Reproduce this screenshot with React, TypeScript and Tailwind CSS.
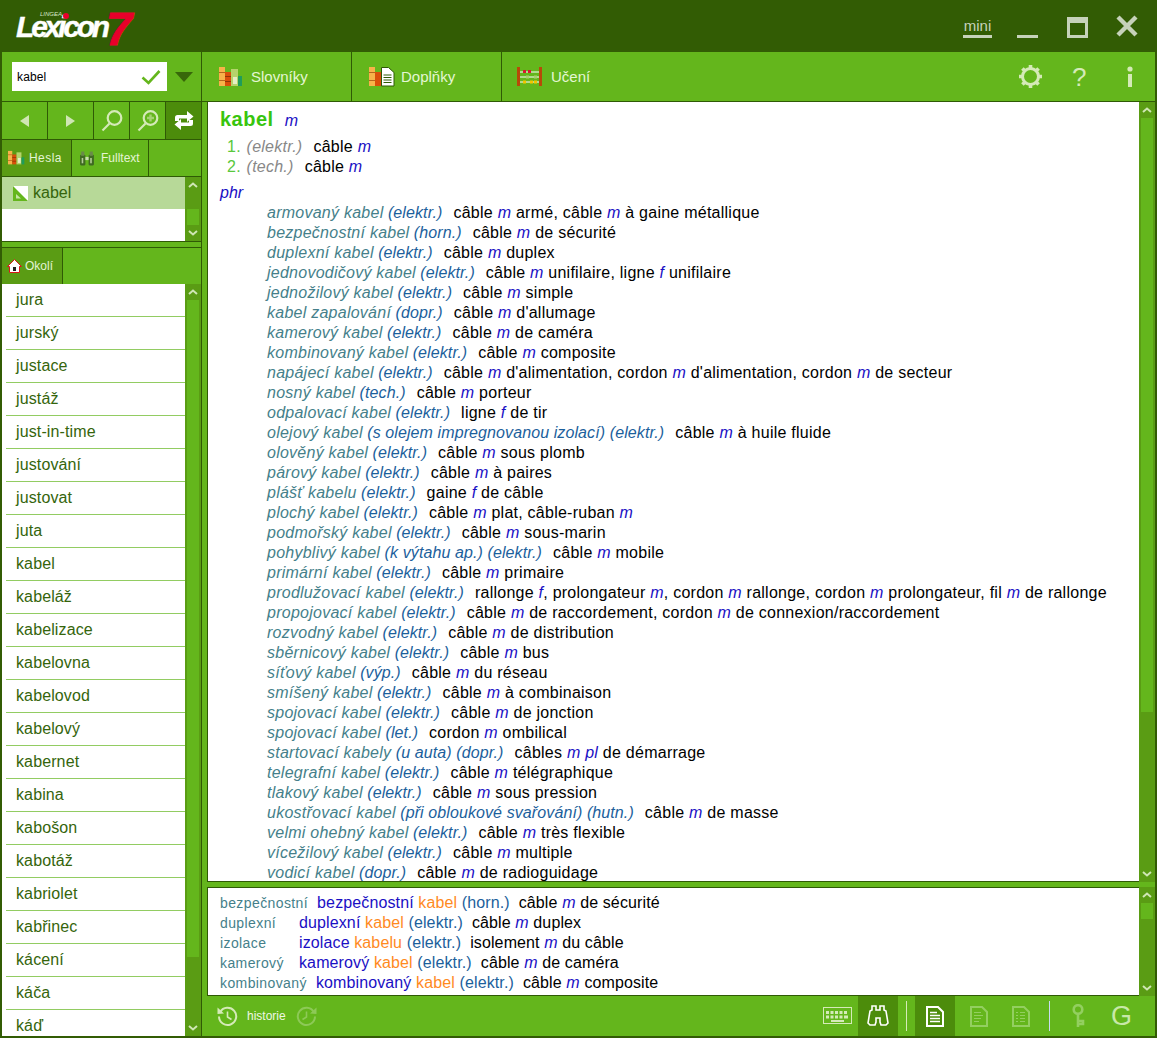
import React from "react";

const arial = "font-['Liberation_Sans',Arial,sans-serif]";

const phrases: [string, string, string][] = [
  ["armovaný kabel", "(elektr.)", "câble *m* armé, câble *m* à gaine métallique"],
  ["bezpečnostní kabel", "(horn.)", "câble *m* de sécurité"],
  ["duplexní kabel", "(elektr.)", "câble *m* duplex"],
  ["jednovodičový kabel", "(elektr.)", "câble *m* unifilaire, ligne *f* unifilaire"],
  ["jednožilový kabel", "(elektr.)", "câble *m* simple"],
  ["kabel zapalování", "(dopr.)", "câble *m* d'allumage"],
  ["kamerový kabel", "(elektr.)", "câble *m* de caméra"],
  ["kombinovaný kabel", "(elektr.)", "câble *m* composite"],
  ["napájecí kabel", "(elektr.)", "câble *m* d'alimentation, cordon *m* d'alimentation, cordon *m* de secteur"],
  ["nosný kabel", "(tech.)", "câble *m* porteur"],
  ["odpalovací kabel", "(elektr.)", "ligne *f* de tir"],
  ["olejový kabel", "(s olejem impregnovanou izolací) (elektr.)", "câble *m* à huile fluide"],
  ["olověný kabel", "(elektr.)", "câble *m* sous plomb"],
  ["párový kabel", "(elektr.)", "câble *m* à paires"],
  ["plášť kabelu", "(elektr.)", "gaine *f* de câble"],
  ["plochý kabel", "(elektr.)", "câble *m* plat, câble-ruban *m*"],
  ["podmořský kabel", "(elektr.)", "câble *m* sous-marin"],
  ["pohyblivý kabel", "(k výtahu ap.) (elektr.)", "câble *m* mobile"],
  ["primární kabel", "(elektr.)", "câble *m* primaire"],
  ["prodlužovací kabel", "(elektr.)", "rallonge *f*, prolongateur *m*, cordon *m* rallonge, cordon *m* prolongateur, fil *m* de rallonge"],
  ["propojovací kabel", "(elektr.)", "câble *m* de raccordement, cordon *m* de connexion/raccordement"],
  ["rozvodný kabel", "(elektr.)", "câble *m* de distribution"],
  ["sběrnicový kabel", "(elektr.)", "câble *m* bus"],
  ["síťový kabel", "(výp.)", "câble *m* du réseau"],
  ["smíšený kabel", "(elektr.)", "câble *m* à combinaison"],
  ["spojovací kabel", "(elektr.)", "câble *m* de jonction"],
  ["spojovací kabel", "(let.)", "cordon *m* ombilical"],
  ["startovací kabely", "(u auta) (dopr.)", "câbles *m pl* de démarrage"],
  ["telegrafní kabel", "(elektr.)", "câble *m* télégraphique"],
  ["tlakový kabel", "(elektr.)", "câble *m* sous pression"],
  ["ukostřovací kabel", "(při obloukové svařování) (hutn.)", "câble *m* de masse"],
  ["velmi ohebný kabel", "(elektr.)", "câble *m* très flexible"],
  ["vícežilový kabel", "(elektr.)", "câble *m* multiple"],
  ["vodicí kabel", "(dopr.)", "câble *m* de radioguidage"],
];

const words = [
  "jura", "jurský", "justace", "justáž", "just-in-time", "justování", "justovat", "juta", "kabel", "kabeláž",
  "kabelizace", "kabelovna", "kabelovod", "kabelový", "kabernet", "kabina", "kabošon", "kabotáž", "kabriolet",
  "kabřinec", "kácení", "káča", "káď",
];

const hits: [string, string, string, string, string][] = [
  ["bezpečnostní", "bezpečnostní", "kabel", "(horn.)", "câble *m* de sécurité"],
  ["duplexní", "duplexní", "kabel", "(elektr.)", "câble *m* duplex"],
  ["izolace", "izolace", "kabelu", "(elektr.)", "isolement *m* du câble"],
  ["kamerový", "kamerový", "kabel", "(elektr.)", "câble *m* de caméra"],
  ["kombinovaný", "kombinovaný", "kabel", "(elektr.)", "câble *m* composite"],
];

function Tr({ s }: { s: string }) {
  return (
    <span className="text-black">
      {s.split("*").map((p, i) =>
        i % 2 ? (
          <em key={i} className="text-[#1a0fc4] italic">{p}</em>
        ) : (
          <span key={i}>{p}</span>
        )
      )}
    </span>
  );
}

function Chevron({ up }: { up?: boolean }) {
  return (
    <svg width="10" height="6" viewBox="0 0 10 6" className="shrink-0">
      <path d={up ? "M1 5 L5 1.500 L9 5" : "M1 1 L5 4.500 L9 1"} fill="none" stroke="#cfe6b4" strokeWidth="2" />
    </svg>
  );
}

function Scrollbar({ before, thumb }: { before: number; thumb: number }) {
  return (
    <div className="w-4 shrink-0 bg-[#5a9c14] flex flex-col items-center">
      <div className="h-[16px] shrink-0 flex items-center justify-center"><Chevron up /></div>
      <div className="flex-1 w-full flex flex-col items-center min-h-0">
        <div style={{ height: before }} />
        <div className="w-[12px] bg-[#64b61c]" style={{ height: thumb }} />
      </div>
      <div className="h-[16px] shrink-0 flex items-center justify-center"><Chevron /></div>
    </div>
  );
}

function Books({ w = 24, h = 20 }: { w?: number; h?: number }) {
  return (
    <svg width={w} height={h} viewBox="0 0 24 20" className="shrink-0">
      <rect x="0" y="0" width="6" height="19" fill="#f7b24a" />
      <rect x="0" y="5" width="6" height="1" fill="#b5651d" />
      <rect x="0" y="13" width="6" height="1" fill="#b5651d" />
      <rect x="6" y="5" width="6" height="14" fill="#d94e0a" />
      <rect x="6" y="9" width="6" height="1" fill="#8f3405" />
      <rect x="6" y="14" width="6" height="1" fill="#8f3405" />
      <rect x="12" y="2" width="7" height="17" fill="#b5d36c" />
      <rect x="14" y="10" width="4" height="7" fill="#e6eec4" />
      <rect x="19" y="9" width="4" height="10" fill="#1f9c5a" />
    </svg>
  );
}

function NavBtn({ w, dark, children }: { w: string; dark?: boolean; children: React.ReactNode }) {
  return (
    <div className={`${w} h-full shrink-0 flex items-center justify-center border-r border-[#2f5a05] last:border-r-0 ${dark ? "bg-[#4c8c0b]" : ""}`}>
      {children}
    </div>
  );
}

function Magnifier({ plus }: { plus?: boolean }) {
  return (
    <svg width="22" height="23" viewBox="0 0 22 23">
      <circle cx="13.500" cy="9" r="6.800" fill="none" stroke="#d5eab8" strokeWidth="2.200" />
      {plus && <path d="M13.500 5.500v7M10 9h7" stroke="#a5d274" strokeWidth="2.400" />}
      <path d="M8.500 14.500 L1.500 21.500" stroke="#d5eab8" strokeWidth="2.200" />
    </svg>
  );
}

function DocIcon({ lines, bright }: { lines: string; bright?: boolean }) {
  const c = bright ? "#ffffff" : "#93cf60";
  return (
    <svg width="18" height="21" viewBox="0 0 18 21">
      <path d="M1 1h11l5 5v14H1z" fill="none" stroke={c} strokeWidth="2" />
      <path d={lines} stroke={c} strokeWidth={bright ? 1.600 : 1} />
    </svg>
  );
}

function HistoryIcon({ dim, flip }: { dim?: boolean; flip?: boolean }) {
  const c = dim ? "#8dc957" : "#d5eab8";
  return (
    <svg width="21" height="21" viewBox="0 0 21 21" style={flip ? { transform: "scaleX(-1)" } : undefined}>
      <path d="M3.200 6 A8.600 8.600 0 1 1 2 10.500" fill="none" stroke={c} strokeWidth="2" />
      <path d="M0.500 1.500 L7 7.500 L0.500 8z" fill={c} />
      <path d="M10.500 5.500v5.500l4 2.500" fill="none" stroke={c} strokeWidth="1.600" />
    </svg>
  );
}

export default function App() {
  return (
    <div className={`${arial} w-[1157px] h-[1038px] overflow-hidden bg-[#325c04] flex flex-col`}>
      {/* Title bar */}
      <div className="h-[52px] shrink-0 flex items-center justify-between">
        <div className="relative w-[130px] h-[52px] ml-[14px]">
          <span className="absolute left-[2px] top-[19px] text-white font-bold italic text-[30px] leading-[16px] tracking-[-3.200px] [-webkit-text-stroke:0.4px_white]">Lexicon</span>
          <span className="absolute left-[26px] top-[11px] text-[#d8e6c8] italic text-[6px] leading-[7px]">LINGEA</span>
          <span className="absolute left-[49px] top-[13px] w-[6px] h-[6px] rounded-full bg-[#e8002a]" />
          <span className="absolute left-[92px] top-[7px] text-[#e8002a] font-bold italic text-[47px] leading-[44px] [-webkit-text-stroke:1px_#e8002a]">7</span>
        </div>
        <div className="flex items-center text-[#c6d2ba] pr-[19px]">
          <span className="text-[15px] leading-[18px] font-normal border-b-[3px] border-[#c6d2ba] mt-[2px] w-[29px] text-center">mini</span>
          <span className="w-[21px] h-[3px] bg-[#c6d2ba] ml-[25px] mt-[21px]" />
          <span className="w-[21px] h-[21px] ml-[29px] border-[3px] border-[#c6d2ba] border-t-[6px] mt-[2px]" />
          <svg width="22" height="22" viewBox="0 0 22 22" className="ml-[28px]">
            <path d="M2 2 L20 20 M20 2 L2 20" stroke="#c6d2ba" strokeWidth="4.400" />
          </svg>
        </div>
      </div>

      {/* Body */}
      <div className="flex-1 min-h-0 flex pl-[2px] pr-[2px] pb-[2px]">
        {/* Sidebar */}
        <aside className="w-[199px] shrink-0 flex flex-col bg-[#64b61c]">
          <div className="h-[49px] shrink-0 flex items-center pl-[10px]">
            <div className="w-[155px] h-[29px] bg-white flex items-center justify-between pl-[5px] pr-[6px]">
              <span className="text-[12px] tracking-[0.15px] text-black">kabel</span>
              <svg width="20" height="16" viewBox="0 0 20 16">
                <path d="M1.500 8.500 L7.500 14 L18.500 2" fill="none" stroke="#64b61c" strokeWidth="2.600" />
              </svg>
            </div>
            <svg width="18" height="10" viewBox="0 0 18 10" className="ml-[8px]">
              <path d="M0 0H18L9 10z" fill="#38670a" />
            </svg>
          </div>
          <div className="h-[38px] shrink-0 flex border-t border-[#2f5a05]">
            <NavBtn w="w-[46px]">
              <svg width="9" height="12" viewBox="0 0 9 12"><path d="M9 0V12L0 6z" fill="#cfe6b4" /></svg>
            </NavBtn>
            <NavBtn w="w-[46px]">
              <svg width="9" height="12" viewBox="0 0 9 12"><path d="M0 0V12L9 6z" fill="#cfe6b4" /></svg>
            </NavBtn>
            <NavBtn w="w-[36px]"><Magnifier /></NavBtn>
            <NavBtn w="w-[36px]"><Magnifier plus /></NavBtn>
            <NavBtn w="w-[35px]" dark>
              <svg width="20" height="21" viewBox="0 0 20 21">
                <path d="M1 11V7.500Q1 5 3.500 5H13V1L19.500 6.500 13 12V8.500H5V11z" fill="#fff" />
                <path d="M19 10v3.500Q19 16 16.500 16H7v4L0.500 14.500 7 9v3.500h8V10z" fill="#fff" />
              </svg>
            </NavBtn>
          </div>
          <div className="h-[37px] shrink-0 flex border-t border-[#2f5a05] text-[12px] text-[#e4f4d4]">
            <div className="w-[70px] flex items-center bg-[#5a9c14] border-r border-[#2f5a05] pl-[6px] gap-[4px]">
              <Books w={17} h={16} />
              <span className="tracking-[0.45px]">Hesla</span>
            </div>
            <div className="w-[77px] flex items-center border-r border-[#2f5a05] pl-[7px] gap-[6px]">
              <svg width="16" height="17" viewBox="0 0 15 15">
                <rect x="1" y="4" width="5" height="10" rx="1" fill="#3f6a22" />
                <rect x="9" y="4" width="5" height="10" rx="1" fill="#3f6a22" />
                <rect x="2" y="1" width="3" height="4" fill="#6a8a4a" />
                <rect x="10" y="1" width="3" height="4" fill="#6a8a4a" />
                <rect x="6" y="6" width="3" height="3" fill="#c9ddb0" />
                <rect x="2.500" y="7" width="1.500" height="5" fill="#b5cc98" />
                <rect x="10.500" y="7" width="1.500" height="5" fill="#b5cc98" />
              </svg>
              <span>Fulltext</span>
            </div>
          </div>
          <div className="h-[65px] shrink-0 flex border-t border-[#2f5a05]">
            <div className="flex-1 bg-white">
              <div className="h-[32px] bg-[#b7d998] flex items-center pl-[11px] gap-[5px]">
                <svg width="15" height="15" viewBox="0 0 15 15">
                  <rect width="15" height="15" fill="#fff" />
                  <path d="M0 0 L15 15 H0z" fill="#64b61c" />
                  <path d="M3 8 L8 12.500 H3z" fill="#c6e6a4" />
                </svg>
                <span className="text-[16px] text-[#35650c]">kabel</span>
              </div>
            </div>
            <Scrollbar before={16} thumb={16} />
          </div>
          <div className="h-[6px] shrink-0 bg-[#64b61c] border-t border-[#2f5a05]" />
          <div className="h-[37px] shrink-0 flex border-t border-[#2f5a05] text-[12px] text-[#e4f4d4]">
            <div className="w-[61px] flex items-center bg-[#5a9c14] border-r border-[#2f5a05] pl-[5px] gap-[3px]">
              <svg width="15" height="14" viewBox="0 0 15 14">
                <path d="M7.500 0.500 L0.500 7.500 H2.500V13.500H12.500V7.500H14.500z" fill="#fff" stroke="#d81818" strokeWidth="1" />
                <rect x="6" y="8" width="3" height="4" fill="#222" />
              </svg>
              <span>Okolí</span>
            </div>
          </div>
          <div className="flex-1 min-h-0 flex">
            <div className="flex-1 bg-white overflow-hidden pl-[4px]">
              {words.map((w) => (
                <div key={w} className="h-[33px] shrink-0 flex items-center pl-[10px] border-b border-[#92cc62] text-[16px] tracking-[0.12px] text-[#35650c]">
                  {w}
                </div>
              ))}
            </div>
            <Scrollbar before={0} thumb={657} />
          </div>
        </aside>

        <div className="w-px shrink-0 bg-[#2f5a05]" />

        {/* Main */}
        <main className="flex-1 min-w-0 flex flex-col bg-[#64b61c]">
          <div className="h-[49px] shrink-0 flex items-center text-[15px] text-[#e4f6d4]">
            <div className="w-[150px] h-full flex items-center border-r border-[#2f5a05] pl-[17px] gap-[8px]">
              <Books />
              <span className="mt-[1px]">Slovníky</span>
            </div>
            <div className="w-[150px] h-full flex items-center border-r border-[#2f5a05] pl-[17px] gap-[6px]">
              <svg width="26" height="20" viewBox="0 0 26 20">
                <rect x="0" y="0" width="6" height="19" fill="#f7b24a" />
                <rect x="0" y="5" width="6" height="1" fill="#b5651d" />
                <rect x="0" y="13" width="6" height="1" fill="#b5651d" />
                <rect x="6" y="5" width="6" height="14" fill="#d94e0a" />
                <path d="M12.500 0.500h7l5.500 5v13.500h-12.500z" fill="#fff" stroke="#2f5a05" />
                <path d="M14.500 8h8M14.500 10.500h8M14.500 13h8M14.500 15.500h8" stroke="#2f5a05" />
              </svg>
              <span className="mt-[1px]">Doplňky</span>
            </div>
            <div className="w-[150px] h-full flex items-center pl-[15px] gap-[8px]">
              <svg width="26" height="20" viewBox="0 0 26 20">
                <rect x="0" y="0" width="3" height="19" fill="#b84a08" />
                <rect x="22" y="0" width="3" height="19" fill="#b84a08" />
                <path d="M3 5h19M3 10h19M3 15h19" stroke="#fff" />
                <path d="M6 3h3v3H6zM11 3h3v3h-3z" fill="#d81830" />
                <path d="M9 8.500h3v3H9zM17 8.500h3v3h-3z" fill="#a8d06c" />
                <path d="M6 13.500h3v3H6zM13 13.500h3v3h-3zM17 13.500h3v3h-3z" fill="#f4c400" />
              </svg>
              <span className="mt-[1px]">Učení</span>
            </div>
            <div className="flex-1 flex items-center justify-end">
              <svg width="25" height="25" viewBox="0 0 25 25">
                <circle cx="12.500" cy="12.500" r="8" fill="none" stroke="#d5eab8" strokeWidth="3" />
                <path d="M12.500 1v3M12.500 21v3M1 12.500h3M21 12.500h3M4.400 4.400l2.100 2.100M18.500 18.500l2.100 2.100M20.600 4.400l-2.100 2.100M6.500 18.500l-2.100 2.100" stroke="#d5eab8" strokeWidth="3.600" />
              </svg>
              <span className="ml-[29px] w-[14px] text-[26px] leading-none text-[#d5eab8]">?</span>
              <svg width="6" height="21" viewBox="0 0 6 21" className="ml-[41px] mr-[22px]">
                <circle cx="3" cy="3" r="2.600" fill="#d5eab8" />
                <rect x="1" y="8" width="4" height="13" fill="#d5eab8" />
              </svg>
            </div>
          </div>

          <div className="h-[781px] shrink-0 flex border-t border-[#2f5a05] pl-[5px]">
            <div className="flex-1 min-w-0 bg-white overflow-hidden pl-[12px] text-[16px] leading-[20px] border-b border-l border-[#2f5a05]">
              <div className="h-[25px] pt-[6px] flex items-baseline">
                <span className="text-[20px] leading-[22px] font-bold tracking-[0.5px] text-[#38c50e]">kabel</span>
                <em className="ml-[11px] text-[#1a0fc4] italic">m</em>
              </div>
              <div className="mt-[10px] pl-[7px]">
                <div className="h-[20px] whitespace-nowrap tracking-[0.25px]">
                  <span className="text-[#58c83c]">1.</span> <i className="text-[#888888] ml-[1px]">(elektr.)</i>
                  <span className="ml-[11px]"><Tr s="câble *m*" /></span>
                </div>
                <div className="h-[20px] whitespace-nowrap tracking-[0.25px]">
                  <span className="text-[#58c83c]">2.</span> <i className="text-[#888888] ml-[1px]">(tech.)</i>
                  <span className="ml-[11px]"><Tr s="câble *m*" /></span>
                </div>
              </div>
              <div className="h-[20px] mt-[6px]"><em className="text-[#1a0fc4] italic">phr</em></div>
              <div className="pl-[47px]">
                {phrases.map(([h, q, t], i) => (
                  <div key={i} className="h-[20px] whitespace-nowrap">
                    <i className="text-[#457f8a] tracking-[0.25px]">{h}</i> <i className="text-[#1c5f9c] tracking-[0.1px]">{q}</i>
                    <span className="ml-[11px] tracking-[0.25px]"><Tr s={t} /></span>
                  </div>
                ))}
              </div>
            </div>
            <Scrollbar before={0} thumb={594} />
          </div>

          <div className="h-[5px] shrink-0" />

          <div className="h-[109px] shrink-0 flex pl-[5px]">
            <div className="flex-1 min-w-0 bg-white border-t border-l border-b border-[#2f5a05] pl-[12px] pt-[5px] text-[16px] leading-[20px] overflow-hidden">
              {hits.map(([l, a, k, q, t]) => (
                <div key={l} className="h-[20px] whitespace-nowrap flex">
                  <span className="inline-block min-w-[79px] pr-[9px] text-[14px] tracking-[0.4px] text-[#457f8a]">{l}</span>
                  <span className="tracking-[0.12px]">
                    <span className="text-[#1a0fc4]">{a}</span> <span className="text-[#ff8a1e]">{k}</span> <span className="text-[#1c5f9c]">{q}</span>
                    <span className="ml-[9px]"><Tr s={t} /></span>
                  </span>
                </div>
              ))}
            </div>
            <Scrollbar before={0} thumb={16} />
          </div>

          {/* Footer */}
          <div className="flex-1 min-h-0 flex items-center text-[12px] text-[#eef8e4]">
            <div className="ml-[15px] w-[21px]"><HistoryIcon /></div>
            <span className="ml-[9px]">historie</span>
            <div className="ml-[10px]"><HistoryIcon dim flip /></div>
            <div className="flex-1" />
            <svg width="29" height="18" viewBox="0 0 29 18">
              <rect x="0.500" y="0.500" width="28" height="16" fill="none" stroke="#d5eab8" />
              <path d="M3 4h3v3H3zM7.500 4h3v3h-3zM12 4h3v3h-3zM16.500 4h3v3h-3zM21 4h3v3h-3zM3 8.500h3v3H3zM7.500 8.500h3v3h-3zM12 8.500h3v3h-3zM16.500 8.500h3v3h-3zM21 8.500h4v3h-4zM8 13h13v2H8z" fill="#d5eab8" />
            </svg>
            <div className="ml-[6px] w-[40px] h-full bg-[#4c8c0b] flex items-center justify-center">
              <svg width="22" height="22" viewBox="0 0 22 22">
                <path d="M5 1h4v4h4V1h4v4l2 1 2 12-2 2h-5l-1-3v-4H9v4l-1 3H3l-2-2L3 6l2-1z" fill="none" stroke="#fff" strokeWidth="1.600" />
              </svg>
            </div>
            <span className="ml-[8px] w-px h-[30px] bg-[#d5eab8]" />
            <div className="ml-[8px] w-[40px] h-full bg-[#4c8c0b] flex items-center justify-center">
              <DocIcon bright lines="M4 6.500h7M4 9.500h10M4 12.500h10M4 15.500h10" />
            </div>
            <div className="ml-[15px] w-[18px] flex"><DocIcon lines="M4 6.500h7M4 9.500h9M4 12.500h7M4 15.500h5" /></div>
            <div className="ml-[24px] w-[18px] flex"><DocIcon lines="M4 6.500h2M8 6.500h5M4 9.500h2M8 9.500h5M4 12.500h2M8 12.500h5M4 15.500h2M8 15.500h5" /></div>
            <span className="ml-[19px] w-px h-[30px] bg-[#c8dcf0]" />
            <svg width="14" height="24" viewBox="0 0 14 24" className="ml-[22px]">
              <circle cx="6" cy="5.500" r="4.300" fill="none" stroke="#93cf60" strokeWidth="2.600" />
              <path d="M6 9v14M6 17h5v3H6" fill="none" stroke="#93cf60" strokeWidth="2.600" />
            </svg>
            <span className="ml-[25px] mr-[23px] text-[27px] leading-none text-[#c8e8a8]">G</span>
          </div>
        </main>
      </div>
    </div>
  );
}
